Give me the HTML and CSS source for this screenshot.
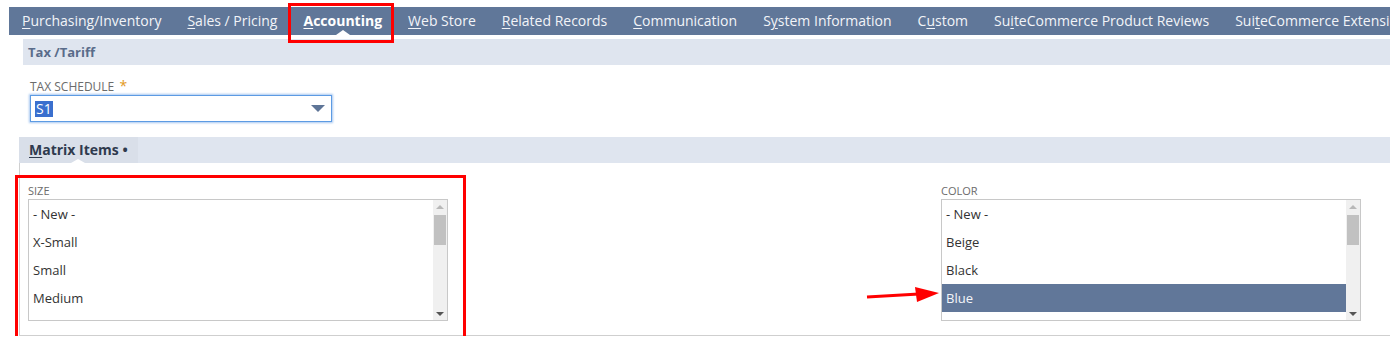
FILE: index.html
```html
<!DOCTYPE html>
<html lang="en">
<head>
    <meta charset="UTF-8">
    <title>Item - Accounting</title>
    <link rel="stylesheet" href="styles.css">
</head>
<body>
    <div class="tabs">
        <div class="tab"><u>P</u>urchasing/Inventory</div>
        <div class="tab"><u>S</u>ales / Pricing</div>
        <div class="tab active"><u>A</u>ccounting<span class="callout"></span></div>
        <div class="tab"><u>W</u>eb Store</div>
        <div class="tab"><u>R</u>elated Records</div>
        <div class="tab"><u>C</u>ommunication</div>
        <div class="tab">S<u>y</u>stem Information</div>
        <div class="tab">C<u>u</u>stom</div>
        <div class="tab">Su<u>i</u>teCommerce Product Reviews</div>
        <div class="tab">Sui<u>t</u>eCommerce Extensions</div>
    </div>

    <div class="section">
        <div class="section-head">Tax /Tariff</div>
        <div class="field">
            <div class="label">Tax Schedule <span class="req">*</span></div>
            <div class="select">
                <span class="sel-text">S1</span>
                <span class="caret-down"></span>
            </div>
        </div>
    </div>

    <div class="subtabs">
        <div class="subtab"><u>M</u>atrix Items •</div>
    </div>

    <div class="matrix">
        <div class="field list-field highlight">
            <div class="label">Size</div>
            <div class="listbox">
                <div class="options">
                    <div class="opt">- New -</div>
                    <div class="opt">X-Small</div>
                    <div class="opt">Small</div>
                    <div class="opt">Medium</div>
                </div>
                <div class="scroll">
                    <span class="arr up"></span>
                    <span class="thumb"></span>
                    <span class="arr down"></span>
                </div>
            </div>
        </div>

        <div class="field list-field">
            <div class="label">Color</div>
            <div class="listbox">
                <div class="options">
                    <div class="opt">- New -</div>
                    <div class="opt">Beige</div>
                    <div class="opt">Black</div>
                    <div class="opt selected">Blue</div>
                </div>
                <div class="scroll">
                    <span class="arr up"></span>
                    <span class="thumb"></span>
                    <span class="arr down"></span>
                </div>
            </div>
            <svg class="pointer" width="80" height="20" viewBox="0 0 80 20">
                <line x1="2" y1="13" x2="54" y2="10" stroke="#f00" stroke-width="3"/>
                <polygon points="50,3 74,9 52,18" fill="#f00"/>
            </svg>
        </div>
    </div>
</body>
</html>
```

FILE: styles.css
```css
* {
    margin: 0;
    padding: 0;
    box-sizing: border-box;
}

html {
    overflow: hidden;
}

body {
    background: #ffffff;
    font-family: "Open Sans", "Liberation Sans", sans-serif;
    color: #333;
    width: 1390px;
    overflow: hidden;
}

u {
    text-decoration: underline;
    text-underline-offset: 2px;
}

/* Main tab strip */
.tabs {
    margin: 7px 0 0 9px;
    height: 28px;
    background: #607799;
    display: flex;
    white-space: nowrap;
}

.tab {
    position: relative;
    flex-shrink: 0;
    padding: 0 13px;
    line-height: 28px;
    font-size: 14px;
    color: #f2f4f8;
}

.tab.active {
    font-weight: 700;
    color: #fff;
}

.tab.active::before {
    content: "";
    position: absolute;
    left: -2px;
    right: 1px;
    top: -4px;
    bottom: -8px;
    border: 3px solid #f00;
}

.callout {
    position: absolute;
    left: 50%;
    bottom: 0;
    margin-left: -7px;
    border-left: 7px solid transparent;
    border-right: 7px solid transparent;
    border-bottom: 5px solid #fff;
}

/* Tax section */
.section {
    margin: 4px 0 0 23px;
}

.section-head {
    height: 26px;
    line-height: 26px;
    background: #dfe5ef;
    padding-left: 5px;
    font-size: 13px;
    font-weight: 700;
    color: #5a6c8a;
}

.section .field {
    margin: 13px 0 0 7px;
}

.label {
    font-size: 12px;
    text-transform: uppercase;
    color: #6b6b6b;
    line-height: 16px;
}

.req {
    color: #e39a1c;
    font-size: 14px;
    margin-left: 2px;
}

.select {
    width: 302px;
    height: 27px;
    border: 1px solid #5d9be3;
    box-shadow: 0 0 2px 1px #a8c8f0;
    display: flex;
    align-items: center;
    justify-content: space-between;
    padding: 0 6px 0 4px;
}

.sel-text {
    background: #3a6fce;
    color: #fff;
    font-size: 14px;
    line-height: 16px;
    padding: 0 1px;
}

.caret-down {
    border-left: 7px solid transparent;
    border-right: 7px solid transparent;
    border-top: 7px solid #5e7597;
}

/* Sub tabs */
.subtabs {
    margin: 15px 0 0 19px;
    height: 26px;
    background: #dfe5ef;
    display: flex;
}

.subtab {
    position: relative;
    background: #d9dfe9;
    padding: 0 10px;
    white-space: nowrap;
    line-height: 26px;
    font-size: 14px;
    font-weight: 700;
    color: #2f3a4d;
}

.subtab::after {
    content: "";
    position: absolute;
    left: 52px;
    bottom: 0;
    border-left: 7px solid transparent;
    border-right: 7px solid transparent;
    border-bottom: 4px solid #fff;
}

/* Matrix body */
.matrix {
    margin-left: 19px;
    height: 173px;
    border-left: 1px solid #cfcfcf;
    border-bottom: 1px solid #cfcfcf;
    display: flex;
    justify-content: space-between;
    padding: 19px 29px 0 8px;
}

.list-field {
    position: relative;
    width: 420px;
}

.list-field .label {
    font-size: 11px;
    line-height: 17px;
}

.highlight::before {
    content: "";
    position: absolute;
    left: -13px;
    right: -18px;
    top: -7px;
    bottom: -8px;
    border: 3px solid #f00;
}

.listbox {
    height: 122px;
    border: 1px solid #c8c8c8;
    display: flex;
}

.options {
    flex: 1;
}

.opt {
    height: 28px;
    line-height: 28px;
    padding-left: 4px;
    font-size: 13px;
    color: #333;
}

.opt.selected {
    background: #617799;
    color: #f4f6f9;
}

.scroll {
    width: 14px;
    background: #f0f0f0;
    display: flex;
    flex-direction: column;
    align-items: center;
    padding: 5px 0 4px;
}

.arr {
    border-left: 4px solid transparent;
    border-right: 4px solid transparent;
}

.arr.up {
    border-bottom: 4px solid #b8b8b8;
}

.arr.down {
    margin-top: auto;
    border-top: 4px solid #555;
}

.thumb {
    width: 12px;
    height: 30px;
    margin-top: 6px;
    background: #c1c1c1;
}

.pointer {
    position: absolute;
    left: -76px;
    top: 102px;
}
```
